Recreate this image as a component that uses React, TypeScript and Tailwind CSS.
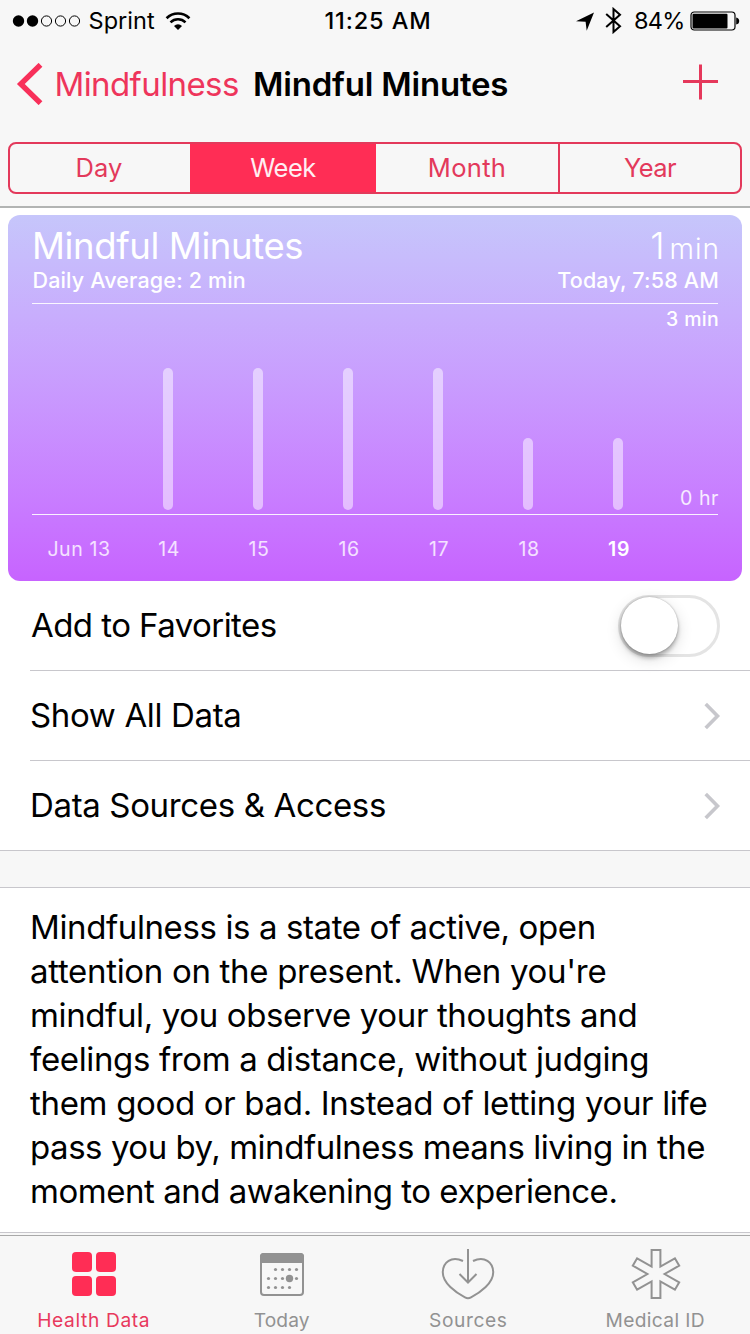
import type { ReactNode } from "react";

function StatusBar() {
  return (
    <div className="grid h-[41px] grid-cols-[1fr_auto_1fr] items-center pl-3 pr-[10px] text-[23.5px] leading-[41px] text-black">
      <div className="flex items-center">
        <svg width="70" height="14" viewBox="0 0 70 14" className="mr-[6.5px]">
          <circle cx="6.5" cy="7" r="5.7" />
          <circle cx="20.5" cy="7" r="5.7" />
          {[34.5, 48.5, 62.5].map((x) => (
            <circle key={x} cx={x} cy="7" r="5.1" fill="none" stroke="#000" strokeWidth="1" />
          ))}
        </svg>
        <span className="tracking-[0.05px]">Sprint</span>
        <svg width="26" height="20" viewBox="0 0 26 20" className="ml-[10.5px]" fill="none" stroke="#000">
          <path d="M1.6 7.2 A16.2 16.2 0 0 1 24.4 7.2" strokeWidth="2.7" />
          <path d="M5.5 11.3 A10.6 10.6 0 0 1 20.5 11.3" strokeWidth="2.5" />
          <path d="M9 14.9 A6 6 0 0 1 17 14.9 L13 19 Z" fill="#000" stroke="none" />
        </svg>
      </div>
      <span className="pl-[4px] font-medium tracking-[0.9px]">11:25 AM</span>
      <div className="flex items-center justify-end">
        <svg width="20" height="20" viewBox="0 0 20 20" className="mr-[10px]">
          <path d="M1 10.2 L19 1.5 L11.7 19.8 L10.6 10.8 Z" />
        </svg>
        <svg width="17" height="27" viewBox="0 0 17 27" className="mr-[12px]" fill="none" stroke="#000" strokeWidth="2">
          <path d="M1.2 7 L15 19.3 L8.5 25 V2 L15 7.7 L1.2 20" />
        </svg>
        <span className="mr-[5.5px] tracking-[-0.8px]">84%</span>
        <svg width="50" height="20" viewBox="0 0 50 20">
          <rect x="1" y="1" width="44" height="18" rx="3.2" fill="none" stroke="#000" strokeWidth="1.2" />
          <rect x="2.5" y="2.7" width="35" height="14.8" rx="1" />
          <path d="M46.2 6.5 Q49.2 7 49.2 10 Q49.2 13 46.2 13.5 Z" />
        </svg>
      </div>
    </div>
  );
}

function NavBar() {
  return (
    <div className="flex h-[86px] items-center pl-4 pr-[32px] text-[33px] leading-[86px]">
      <svg width="27" height="42" viewBox="0 0 27 42" fill="none" stroke="#f8305a" strokeWidth="5.4">
        <path d="M24.5 1.8 L4.8 21 L24.5 40.2" />
      </svg>
      <span className="ml-[11.5px] w-[198.5px] whitespace-nowrap tracking-[-0.6px] text-[#ee355b]">Mindfulness</span>
      <h1 className="whitespace-nowrap font-semibold tracking-[-0.2px] text-black">Mindful Minutes</h1>
      <svg width="36" height="36" viewBox="0 0 36 36" className="mb-[5px] ml-auto" stroke="#e5385b" strokeWidth="3">
        <path d="M18.5 0.5 V35.5 M1 17.5 H36" />
      </svg>
    </div>
  );
}

function RangePicker() {
  return (
    <div className="mx-2 mt-[15px] flex h-[52px] overflow-hidden rounded-[8px] border-2 border-[#e3395b] text-center text-[25.5px] leading-[47px] text-[#e3395b]">
      <span className="w-[178px] tracking-[0.1px]">Day</span>
      <span className="-my-0.5 ml-[2px] w-[186px] bg-[#ff2d55] pt-0.5 tracking-[-0.5px] text-[#ffeef2]">Week</span>
      <span className="w-[182px] tracking-[0.3px]">Month</span>
      <span className="flex-1 border-l-2 border-[#e3395b] tracking-[-0.6px]">Year</span>
    </div>
  );
}

const days = [
  { label: "Jun 13", minutes: 0 },
  { label: "14", minutes: 2 },
  { label: "15", minutes: 2 },
  { label: "16", minutes: 2 },
  { label: "17", minutes: 2 },
  { label: "18", minutes: 1 },
  { label: "19", minutes: 1 },
];

function ChartCard() {
  return (
    <section className="mx-2 mt-[7px] flex h-[366px] flex-col rounded-[12px] bg-linear-to-b from-[#c6c6fb] to-[#c763ff] pl-6 pr-6 text-white">
      <div className="flex h-[46px] items-baseline justify-between pt-[9px] text-[36.5px] font-light leading-[44px]">
        <h2 className="font-normal tracking-[-0.39px]">Mindful Minutes</h2>
        <p className="-mr-[2px]">
          1<span className="ml-[5px] text-[28px] tracking-[1px]">min</span>
        </p>
      </div>
      <div className="flex h-[42px] justify-between pt-[6px] text-[21.5px] font-medium leading-[26px]">
        <span className="pl-[0.5px] tracking-[0.16px]">Daily Average: 2 min</span>
        <span className="-mr-[1px] tracking-[0.16px]">Today, 7:58 AM</span>
      </div>
      <div className="flex h-[212px] justify-between border-y border-white/90 pl-px">
        <div className="flex items-end pb-1">
          {days.map((d) => (
            <div key={d.label} className="flex w-[90px] justify-center">
              <div
                className="w-[10px] rounded-full bg-white/50"
                style={{ height: d.minutes ? 2 + d.minutes * 70 : 0 }}
              />
            </div>
          ))}
        </div>
        <div className="-ml-8 -mr-[1px] flex flex-1 flex-col items-end justify-between whitespace-nowrap pb-[3px] pt-[2px] text-[19.5px] leading-[26px]">
          <span className="font-medium tracking-[0.3px]">3 min</span>
          <span className="tracking-[0.6px] text-white/85">0 hr</span>
        </div>
      </div>
      <div className="flex pl-px pt-[21px] text-center text-[19.5px] leading-[26px] tracking-[0.6px] text-white/80">
        {days.map((d, i) => (
          <span key={d.label} className={i === 6 ? "w-[90px] pl-0.5 font-semibold text-white" : "w-[90px] pl-0.5"}>
            {d.label}
          </span>
        ))}
      </div>
    </section>
  );
}

function Chevron() {
  return (
    <svg width="18" height="28" viewBox="0 0 18 28" fill="none" stroke="#c7c7cc" strokeWidth="3.6">
      <path d="M1.7 2 L13.5 14 L1.7 26" />
    </svg>
  );
}

function Row({ children, label, last }: { children: ReactNode; label: ReactNode; last?: boolean }) {
  return (
    <div className={last ? "flex h-[89px] items-center pr-7" : "ml-[30px] flex h-[90px] items-center border-b border-[#c8c7cc] pr-7"}>
      <span className={last ? "ml-[30px] flex-1" : "flex-1"}>{label}</span>
      {children}
    </div>
  );
}

function Settings() {
  return (
    <section className="border-b border-[#c8c7cc] text-[33px] leading-[86px] text-black">
      <Row label={<span className="mb-[2px] block pl-px tracking-[-0.56px]">Add to Favorites</span>}>
        <div className="mr-0.5 flex h-[62px] w-[102px] items-start rounded-full border-3 border-[#e4e4e4] bg-white">
          <div className="-mt-px size-[57px] rounded-full bg-white shadow-[0_4px_4px_rgba(0,0,0,0.26),0_5px_16px_rgba(0,0,0,0.14),0_0_2px_rgba(0,0,0,0.3)]" />
        </div>
      </Row>
      <Row label={<span className="mb-[2px] block tracking-[-0.35px]">Show All Data</span>}>
        <Chevron />
      </Row>
      <Row last label={<span className="mb-[2px] block tracking-[-0.35px]">Data Sources &amp; Access</span>}>
        <Chevron />
      </Row>
    </section>
  );
}

function Description() {
  return (
    <section className="h-[345px] whitespace-nowrap border-b border-[#c8c7cc] bg-white pl-[30px] pt-[17px] text-[33px] leading-[44px] text-black">
      <p>
        <span className="block tracking-[-0.39px]">Mindfulness is a state of active, open</span>
        <span className="block tracking-[-0.31px]">attention on the present. When you're</span>
        <span className="block tracking-[-0.37px]">mindful, you observe your thoughts and</span>
        <span className="block tracking-[-0.36px]">feelings from a distance, without judging</span>
        <span className="block tracking-[-0.32px]">them good or bad. Instead of letting your life</span>
        <span className="block tracking-[-0.46px]">pass you by, mindfulness means living in the</span>
        <span className="block tracking-[-0.47px]">moment and awakening to experience.</span>
      </p>
    </section>
  );
}

function GridIcon() {
  return (
    <svg width="56" height="52" viewBox="0 0 56 52" fill="#ff2d55">
      {[6, 30].map((x) => [4, 28].map((y) => <rect key={`${x}-${y}`} x={x} y={y} width="20" height="20" rx="4" />))}
    </svg>
  );
}

const calendarDots = [
  [21.5, 21.5], [28.5, 21.5], [35.5, 21.5], [42.5, 21.5],
  [14.5, 30.5], [21.5, 30.5], [28.5, 30.5], [42.5, 30.5],
  [14.5, 39.5], [21.5, 39.5], [28.5, 39.5], [35.5, 39.5],
];

function CalendarIcon() {
  return (
    <svg width="56" height="52" viewBox="0 0 56 52" fill="#929292" className="ml-[2px]">
      <rect x="7" y="6" width="42" height="41" rx="3" fill="none" stroke="#929292" strokeWidth="2" />
      <path d="M6 15 V8.5 Q6 5 9.5 5 H46.5 Q50 5 50 8.5 V15 Z" />
      {calendarDots.map(([x, y]) => (
        <circle key={`${x}-${y}`} cx={x} cy={y} r="1.6" />
      ))}
      <circle cx="35.5" cy="30.5" r="3.7" />
    </svg>
  );
}

function SourcesIcon() {
  return (
    <svg width="56" height="52" viewBox="0 0 56 52" fill="none" stroke="#929292" strokeWidth="2" className="mr-[2px]">
      <path d="M23 13 C11.5 7.5 2.8 14.3 2.8 24.5 C2.8 35 15.5 44.5 25 49.3 Q28 51 31 49.3 C40.5 44.5 53.2 35 53.2 24.5 C53.2 14.3 44.5 7.5 33 13" />
      <path d="M28 1 V34 M19.5 26 L28 34.5 L36.5 26" />
    </svg>
  );
}

function MedicalIcon() {
  return (
    <svg width="56" height="52" viewBox="0 0 56 52" fill="none" stroke="#929292" strokeWidth="2">
      <path d="M23.6 2 H32.4 V18.5 L46.9 10.3 L51.2 17.7 L36.6 26 L51.2 34.3 L46.9 41.7 L32.4 33.5 V50 H23.6 V33.5 L9.1 41.7 L4.8 34.3 L19.4 26 L4.8 17.7 L9.1 10.3 L23.6 18.5 Z" />
    </svg>
  );
}

function TabBar() {
  return (
    <nav className="mt-[2px] grid h-[99px] grid-cols-4 border-t border-[#a9a9a9] pt-3 text-center text-[19.2px] leading-[24px] text-[#929292]">
      <div className="flex flex-col items-center text-[#e8395d]">
        <GridIcon />
        <span className="mt-[8px] tracking-[0.63px]">Health Data</span>
      </div>
      <div className="flex flex-col items-center">
        <CalendarIcon />
        <span className="mt-[8px] pl-px tracking-[0.1px]">Today</span>
      </div>
      <div className="flex flex-col items-center">
        <SourcesIcon />
        <span className="mt-[8px] mr-px tracking-[0.6px]">Sources</span>
      </div>
      <div className="flex flex-col items-center">
        <MedicalIcon />
        <span className="mt-[8px] mr-[2px] tracking-[0.36px]">Medical ID</span>
      </div>
    </nav>
  );
}

export default function App() {
  return (
    <div className="flex h-[1334px] w-[750px] flex-col overflow-hidden bg-[#f7f7f7] font-['Inter',sans-serif]">
      <header className="h-[208px] shrink-0 border-b-2 border-[#b2b4b3]">
        <StatusBar />
        <NavBar />
        <RangePicker />
      </header>
      <main className="shrink-0">
        <div className="bg-white pt-px">
          <div className="-mt-px flow-root">
            <ChartCard />
          </div>
          <Settings />
        </div>
        <div className="h-[37px] border-b border-[#c8c7cc]" />
        <Description />
      </main>
      <TabBar />
    </div>
  );
}
